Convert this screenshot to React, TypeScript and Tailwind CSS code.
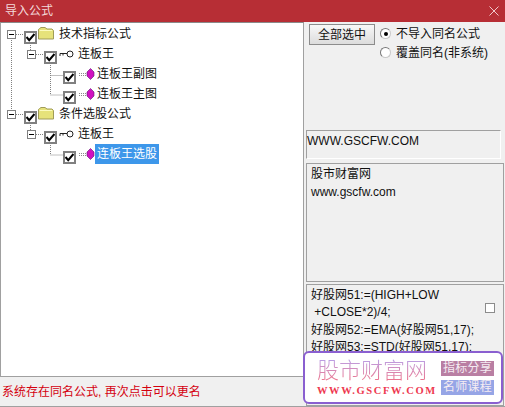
import { useState } from "react";

const cjk = `font-["Liberation_Sans","Noto_Sans_CJK_SC",sans-serif]`;

function Expander() {
  return (
    <span className="flex h-[9px] w-[9px] shrink-0 items-center justify-center border border-[#808080] bg-white">
      <span className="h-px w-[5px] bg-black" />
    </span>
  );
}

function TreeCheck() {
  return (
    <span className="relative top-[3px] flex h-[13px] w-[13px] shrink-0 items-center justify-center border-2 border-[#808080] bg-white">
      <svg width="9" height="9" viewBox="0 0 9 9">
        <path d="M0.5 4 L3.2 7.2 L8.5 1" fill="none" stroke="#000" strokeWidth="2" />
      </svg>
    </span>
  );
}

function FolderIcon() {
  return (
    <svg width="16" height="13" viewBox="0 0 16 13" className="relative -top-[1px] shrink-0">
      <path d="M0.5 12 V3 Q0.5 2 1.5 1.5 L3 0.5 H7 L9 2 H14 L15.5 3.5 V12 Z" fill="#e6e27a" stroke="#a09c58" />
      <path d="M1.5 3.5 H14" stroke="#fbfac0" />
    </svg>
  );
}

function KeyIcon() {
  return (
    <svg width="15" height="8" viewBox="0 0 15 8" className="relative -left-px shrink-0">
      <circle cx="11" cy="4" r="3" fill="none" stroke="#222" />
      <path d="M8 3.5 H1 M1 3.5 V6 M4 3.5 V5.5" fill="none" stroke="#222" />
    </svg>
  );
}

function GemIcon() {
  return (
    <svg width="16" height="12" viewBox="0 0 16 12" className="shrink-0">
      <path d="M0 5.5 H7 M0 7.5 H7" stroke="#8a8a8a" strokeDasharray="1 1" />
      <path d="M11.5 0.5 L15 4 V8 L11.5 11.5 L8 8 V4 Z" fill="#d010c0" stroke="#5a1a70" strokeWidth="0.6" />
    </svg>
  );
}

function TreeRow({
  indent,
  icon,
  label,
  gap,
  expander,
  selected,
}: {
  indent: string;
  icon: React.ReactNode;
  label: string;
  gap: string;
  expander?: boolean;
  selected?: boolean;
}) {
  return (
    <div className={`flex h-5 items-center ${indent}`}>
      {expander && <Expander />}
      {expander && <span className="w-2 shrink-0" />}
      <TreeCheck />
      <span className={`flex w-4 shrink-0 items-center ${gap}`}>{icon}</span>
      <span
        className={`flex h-5 items-center px-[2px] text-xs ${
          selected ? "bg-[#3d97ea] text-white" : "text-[#111]"
        }`}
      >
        {label}
      </span>
    </div>
  );
}

const formula = ["好股网51:=(HIGH+LOW", " +CLOSE*2)/4;", "好股网52:=EMA(好股网51,17);", "好股网53:=STD(好股网51,17);"];

export default function App() {
  const [mode, setMode] = useState(0);
  return (
    <div className={`relative flex h-[407px] w-[505px] flex-col overflow-hidden bg-[#f0f0f0] ${cjk}`}>
      <div className="flex h-[22px] shrink-0 items-center justify-between bg-[#b72e35] pl-[5px] pr-[6px] text-xs text-[#f3d9da]">
        <span>导入公式</span>
        <svg width="10" height="10" viewBox="0 0 10 10">
          <path d="M0.5 0.5 L9.5 9.5 M9.5 0.5 L0.5 9.5" stroke="#f0c8ca" />
        </svg>
      </div>

      <div className="flex min-h-0 flex-1 border-b border-[#a0a0a0]">
        <div className="flex w-[304px] shrink-0 flex-col">
          <div className="relative h-[355px] border border-[#a0a0a0] border-t-[#8a8a8a] bg-white pl-[6px] pt-[1px]">
            <svg width="100" height="150" className="absolute left-0 top-0" fill="none" stroke="#808080" strokeDasharray="1 1">
              <path d="M10.5 15 V87 M15 11.5 H23 M29.5 22 V28" />
              <path d="M33 31.5 H43 M49.5 40 V72 H62 M49.5 52.5 H62" />
              <path d="M15 91.5 H23 M29.5 102 V108 M33 111.5 H43 M49.5 120 V132 H62" />
            </svg>
            <div className="relative">
              <TreeRow indent="pl-0" gap="ml-px mr-[3px]" expander icon={<FolderIcon />} label="技术指标公式" />
              <TreeRow indent="pl-[20px]" gap="ml-[3px]" expander icon={<KeyIcon />} label="连板王" />
              <TreeRow indent="pl-[56px]" gap="ml-[3px]" icon={<GemIcon />} label="连板王副图" />
              <TreeRow indent="pl-[56px]" gap="ml-[3px]" icon={<GemIcon />} label="连板王主图" />
              <TreeRow indent="pl-0" gap="ml-px mr-[3px]" expander icon={<FolderIcon />} label="条件选股公式" />
              <TreeRow indent="pl-[20px]" gap="ml-[3px]" expander icon={<KeyIcon />} label="连板王" />
              <TreeRow indent="pl-[56px]" gap="ml-[3px]" icon={<GemIcon />} label="连板王选股" selected />
            </div>
          </div>
          <div className="flex flex-1 items-center pl-[2px] text-xs text-[#d4000f]">
            系统存在同名公式, 再次点击可以更名
          </div>
        </div>

        <div className="flex min-w-0 flex-1 flex-col pl-[2px] pr-[1px] text-xs text-[#111]">
          <div className="flex h-[108px] shrink-0 items-start pl-[3px] pt-[2px]">
            <button className="h-[21px] w-[66px] border border-[#8c8c8c] bg-gradient-to-b from-[#f8f8f8] to-[#dcdcdc] text-xs">
              全部选中
            </button>
            <div className="ml-[5px] flex flex-col">
              {["不导入同名公式", "覆盖同名(非系统)"].map((label, i) => (
                <label key={label} className="flex h-[19px] items-center" onClick={() => setMode(i)}>
                  <span className="flex h-[11px] w-[11px] items-center justify-center rounded-full border border-[#c8c8c8] border-l-[#777] border-t-[#777] bg-white">
                    {mode === i && <span className="h-1 w-1 rounded-full bg-black" />}
                  </span>
                  <span className="ml-[5px]">{label}</span>
                </label>
              ))}
            </div>
          </div>
          <div className="mr-[3px] h-[29px] shrink-0 border border-[#a0a0a0] border-b-white border-r-white pl-0 pt-[2px] text-xs leading-4">
            WWW.GSCFW.COM
          </div>
          <div className="mt-[4px] h-[119px] shrink-0 border border-[#a0a0a0] pl-[4px] pt-[1px] text-xs">
            <div className="flex h-[18px] items-center">股市财富网</div>
            <div className="flex h-[18px] items-center">www.gscfw.com</div>
          </div>
          <div className="relative mt-[2px] flex-1 overflow-hidden border border-[#a0a0a0] pl-[4px] pt-[2px] text-xs leading-[17.3px]">
            {formula.map((line) => (
              <div key={line} className="whitespace-pre">
                {line}
              </div>
            ))}
            <span className="absolute right-[8px] top-[18px] h-[10px] w-[10px] border border-[#8c8c8c] bg-white" />
          </div>
        </div>
      </div>

      <div className="absolute left-[303px] top-[351px] flex h-[53px] w-[200px] items-center rounded-md border-2 border-[#8a5fd0] bg-white pl-[12px]">
        <div className="flex w-[124px] flex-col">
          <span className="bg-gradient-to-b from-[#b8a0e8] to-[#f06a80] bg-clip-text text-[22px] font-extralight leading-[24px] text-transparent">
            股市财富网
          </span>
          <span className={`mt-[2px] font-["Liberation_Serif",serif] text-[10.5px] font-bold leading-3 tracking-[1.6px] text-[#ee3a50]`}>
            WWW.GSCFW.COM
          </span>
        </div>
        <div className="flex flex-col gap-1 whitespace-nowrap text-xs leading-[15px] tracking-[0.3px] text-[#f5ecf2]">
          <span className="flex h-[15px] w-[53px] items-center justify-center bg-[#b97fa3]">指标分享</span>
          <span className="flex h-[15px] w-[53px] items-center justify-center bg-[#96a5e6]">名师课程</span>
        </div>
      </div>
    </div>
  );
}
